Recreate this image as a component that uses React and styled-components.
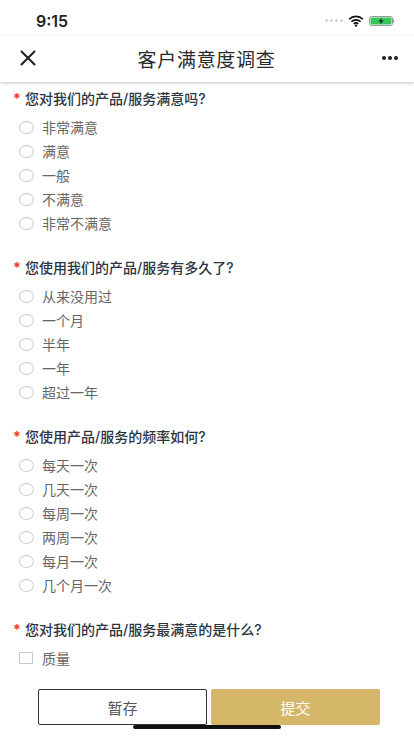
import styled, { createGlobalStyle } from "styled-components";
import { X } from "lucide-react";

const GlobalStyle = createGlobalStyle`
  html, body {
    margin: 0;
    padding: 0;
    background: #fff;
  }
  * {
    box-sizing: border-box;
  }
`;

const Page = styled.div`
  position: relative;
  width: 414px;
  height: 736px;
  display: flex;
  flex-direction: column;
  overflow: hidden;
  background: #fff;
  font-family: "Inter", "Noto Sans CJK SC", sans-serif;
`;

const StatusBar = styled.div`
  height: 36px;
  flex: none;
  display: flex;
  align-items: center;
  justify-content: space-between;
  padding: 5px 20px 0 36px;
`;

const Time = styled.span`
  font-size: 16px;
  font-weight: 600;
  color: #222;
`;

const StatusIcons = styled.div`
  display: flex;
  align-items: center;
  gap: 5px;
`;

const Signal = styled.div`
  display: flex;
  gap: 1.5px;
`;

const Dot = styled.span`
  width: 3.5px;
  height: 3.5px;
  border-radius: 50%;
  background: #d4d4d4;
`;

const NavBar = styled.div`
  height: 46px;
  flex: none;
  display: grid;
  grid-template-columns: 1fr auto 1fr;
  align-items: center;
  padding: 0 16px 2px 15px;
  background: #fff;
  box-shadow: 0 1px 3px rgba(0, 0, 0, 0.25);
  position: relative;
  z-index: 1;
`;

const Title = styled.h1`
  margin: 0;
  font-size: 19px;
  letter-spacing: 0.7px;
  font-weight: 400;
  color: #2a2a2a;
`;

const More = styled.div`
  display: flex;
  justify-self: end;
  gap: 2px;
`;

const MoreDot = styled.span`
  width: 4px;
  height: 4px;
  flex: none;
  border-radius: 50%;
  background: #222;
`;

const Form = styled.div`
  flex: 1;
  min-height: 0;
  overflow: hidden;
  padding: 6px 13px 0;
`;

const Question = styled.section`
  margin-bottom: 22px;
`;

const QuestionTitle = styled.div`
  display: flex;
  align-items: center;
  height: 20px;
  margin-bottom: 7px;
  font-size: 14px;
  font-weight: 500;
  color: #2b3442;
`;

const Star = styled.span`
  width: 12px;
  flex: none;
  color: #f0392b;
  font-weight: 700;
`;

const Option = styled.div`
  display: flex;
  align-items: center;
  height: 24px;
  padding-left: 6px;
  font-size: 14px;
  color: #666;
`;

const Radio = styled.span`
  width: 15px;
  height: 13px;
  flex: none;
  margin-right: 8px;
  border: 1px solid #c8c8c8;
  border-radius: 50%;
`;

const Checkbox = styled.span`
  width: 14px;
  height: 12px;
  flex: none;
  margin-right: 9px;
  border: 1px solid #c8c8c8;
  border-radius: 1px;
`;

const Footer = styled.div`
  flex: none;
  display: flex;
  justify-content: center;
  gap: 4px;
  padding: 0 0 11px 4px;
  background: #fff;
`;

const SaveButton = styled.button`
  width: 169px;
  height: 36px;
  padding: 0;
  background: #fff;
  border: 1px solid #333;
  border-radius: 2px;
  font-family: inherit;
  font-size: 15px;
  color: #555;
`;

const SubmitButton = styled(SaveButton)`
  background: #d5b76a;
  border-color: #d5b76a;
  color: #fff;
`;

const HomeIndicator = styled.div`
  position: absolute;
  left: 133px;
  bottom: 7px;
  width: 148px;
  height: 4px;
  border-radius: 2px;
  background: #111;
`;

const questions = [
  {
    title: "您对我们的产品/服务满意吗?",
    options: ["非常满意", "满意", "一般", "不满意", "非常不满意"],
  },
  {
    title: "您使用我们的产品/服务有多久了?",
    options: ["从来没用过", "一个月", "半年", "一年", "超过一年"],
  },
  {
    title: "您使用产品/服务的频率如何?",
    options: ["每天一次", "几天一次", "每周一次", "两周一次", "每月一次", "几个月一次"],
  },
  {
    title: "您对我们的产品/服务最满意的是什么?",
    options: ["质量"],
    multiple: true,
  },
];

function Wifi() {
  return (
    <svg width="16" height="12" viewBox="0 0 16 12">
      <path d="M1 4.2a10 10 0 0 1 14 0M3.4 6.7a6.6 6.6 0 0 1 9.2 0M5.7 9a3.3 3.3 0 0 1 4.6 0" fill="none" stroke="#111" strokeWidth="1.6" />
      <circle cx="8" cy="10.6" r="1.2" fill="#111" />
    </svg>
  );
}

function Battery() {
  return (
    <svg width="25" height="10" viewBox="0 0 25 10">
      <rect x="0.5" y="0.5" width="23" height="9" rx="2" fill="none" stroke="#999" />
      <rect x="1.5" y="1.5" width="21" height="7" rx="1" fill="#35c759" />
      <rect x="24" y="3" width="1" height="4" fill="#999" />
      <path d="M13.2 1.8 9.4 5.6h2.6l-1.2 2.6 3.9-3.8h-2.6z" fill="#111" />
    </svg>
  );
}

function App() {
  return (
    <Page>
      <GlobalStyle />
      <StatusBar>
        <Time>9:15</Time>
        <StatusIcons>
          <Signal>
            <Dot />
            <Dot />
            <Dot />
            <Dot />
          </Signal>
          <Wifi />
          <Battery />
        </StatusIcons>
      </StatusBar>
      <NavBar>
        <X size={26} color="#222" strokeWidth={1.9} />
        <Title>客户满意度调查</Title>
        <More>
          <MoreDot />
          <MoreDot />
          <MoreDot />
        </More>
      </NavBar>
      <Form>
        {questions.map((q) => (
          <Question key={q.title}>
            <QuestionTitle>
              <Star>*</Star>
              {q.title}
            </QuestionTitle>
            {q.options.map((label) => (
              <Option key={label}>
                {q.multiple ? <Checkbox /> : <Radio />}
                {label}
              </Option>
            ))}
          </Question>
        ))}
      </Form>
      <Footer>
        <SaveButton>暂存</SaveButton>
        <SubmitButton>提交</SubmitButton>
      </Footer>
      <HomeIndicator />
    </Page>
  );
}

export default App;
